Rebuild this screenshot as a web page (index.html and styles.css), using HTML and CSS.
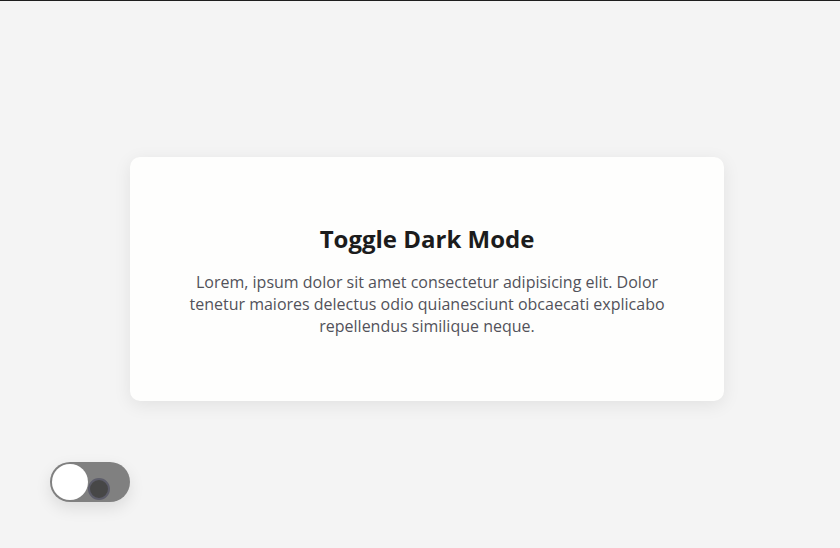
FILE: index.html
```html
<!DOCTYPE html>
<html>
<head>
<meta charset="utf-8">
<link rel="stylesheet" href="styles.css">
</head>
<body>
<main class="page">
  <section class="card">
    <h1 class="card-title">Toggle Dark Mode</h1>
    <p class="card-text">Lorem, ipsum dolor sit amet consectetur adipisicing elit. Dolor tenetur maiores delectus odio quianesciunt obcaecati explicabo repellendus similique neque.</p>
  </section>
</main>
<button class="toggle" aria-label="Toggle dark mode">
  <span class="knob"></span>
  <span class="dot"></span>
</button>
</body>
</html>
```
FILE: styles.css
```css
* { box-sizing: border-box; }
html, body { margin: 0; padding: 0; }
body {
  width: 840px;
  height: 548px;
  background: #f4f4f4;
  border-top: 1px solid #1e1e1e;
  font-family: "Open Sans", "Liberation Sans", sans-serif;
  overflow: hidden;
}
.page {
  height: 547px;
  display: flex;
  align-items: flex-start;
  justify-content: flex-start;
}
.card {
  margin: 156px 0 0 130px;
  width: 594px;
  height: 244px;
  background: #fefefd;
  border-radius: 10px;
  box-shadow: 0 4px 18px rgba(0, 0, 0, 0.08);
  padding: 2px 52px 0;
  display: flex;
  flex-direction: column;
  justify-content: center;
  align-items: center;
  text-align: center;
}
.card-title {
  margin: 0 0 16px;
  font-size: 24px;
  font-weight: 700;
  color: #1c1c1c;
  line-height: 32px;
}
.card-text {
  margin: 0;
  font-size: 16px;
  line-height: 22px;
  color: #52525a;
}
.toggle {
  position: fixed;
  left: 50px;
  top: 462px;
  width: 80px;
  height: 40px;
  padding: 0;
  border: none;
  border-radius: 20px;
  background: #808080;
  box-shadow: 0 6px 16px rgba(0, 0, 0, 0.1);
}
.knob {
  position: absolute;
  left: 2px;
  top: 2px;
  width: 36px;
  height: 36px;
  border-radius: 50%;
  background: #ffffff;
}
.dot {
  position: absolute;
  left: 38px;
  top: 16px;
  width: 22px;
  height: 22px;
  border-radius: 50%;
  background: #474747;
  border: 2px solid #5d5d6a;
}
```
